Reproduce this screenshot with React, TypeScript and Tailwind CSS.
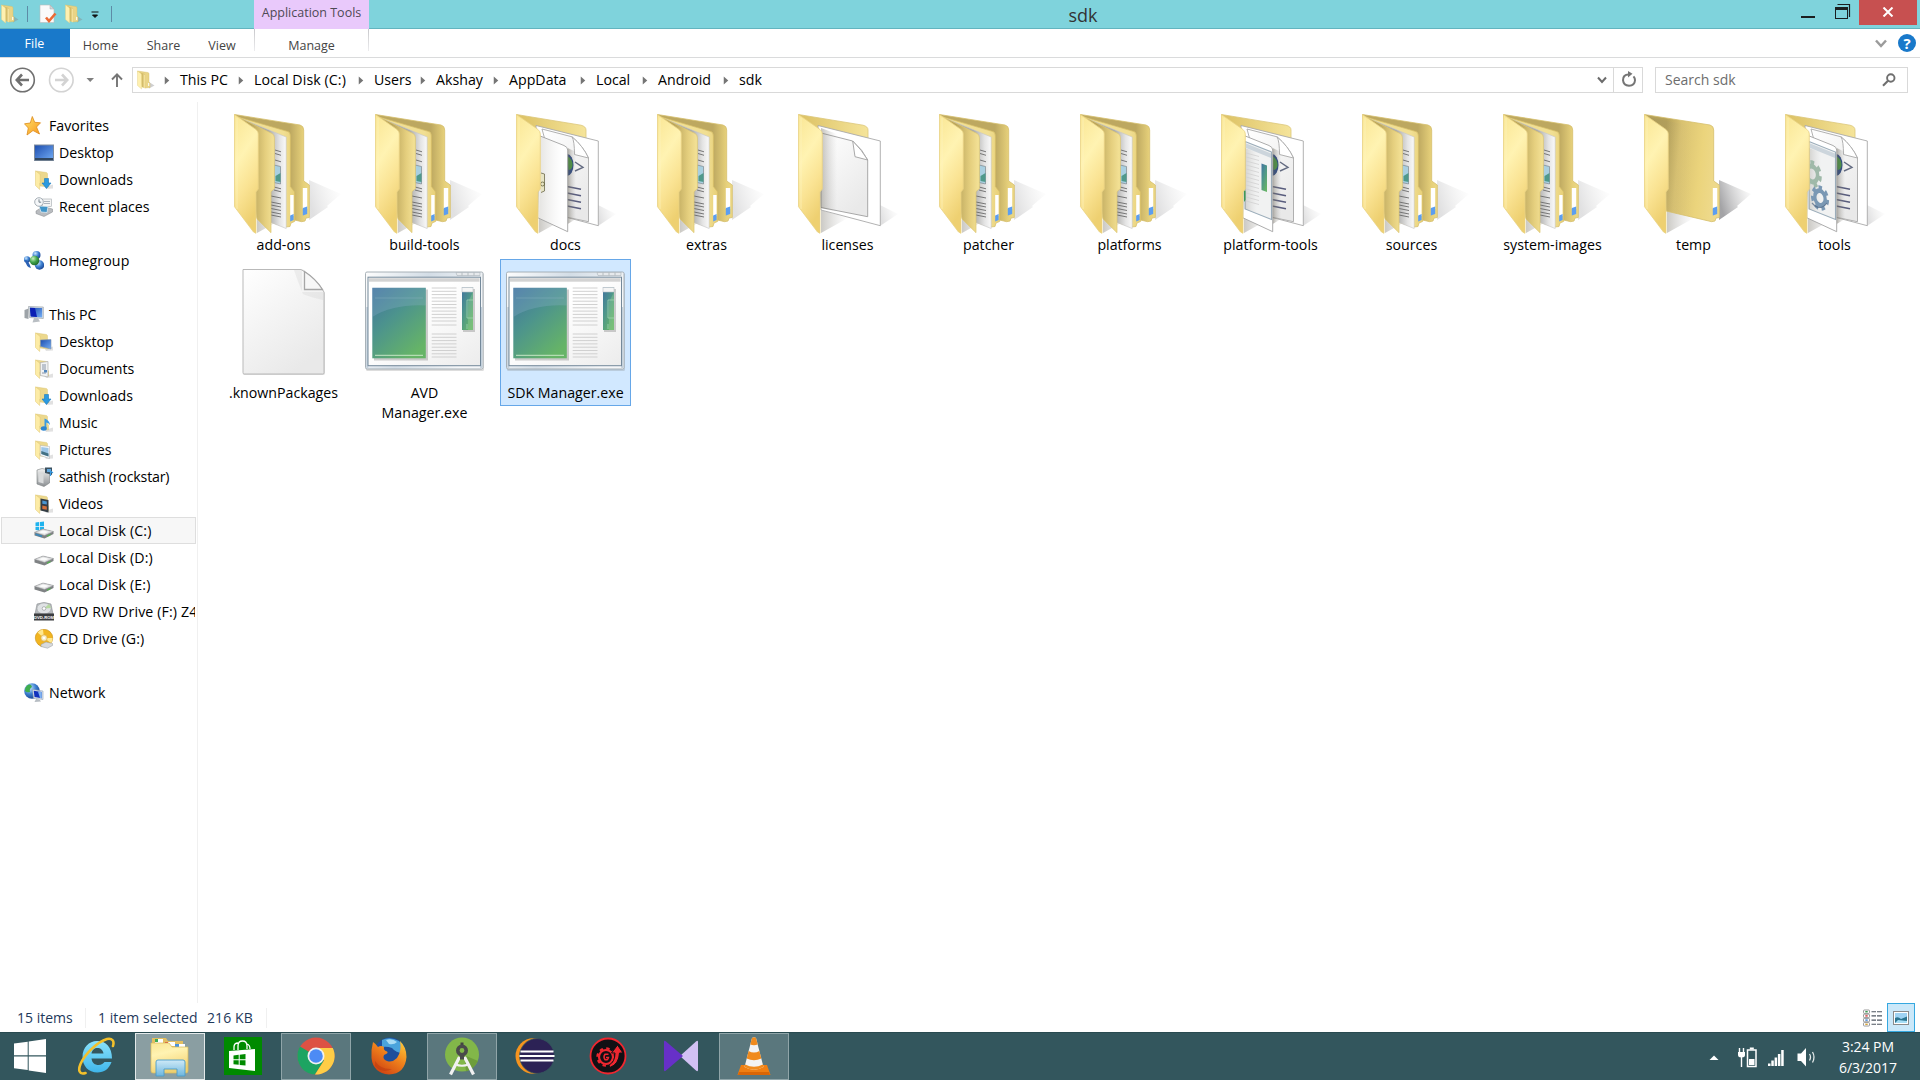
import type { ReactNode } from "react";

type FolderKind = "full" | "docs" | "paper" | "window" | "gears" | "empty";

const crumbs = [
  { label: "This PC", width: "w-[74px]" },
  { label: "Local Disk (C:)", width: "w-[120px] tracking-[0.08px]" },
  { label: "Users", width: "w-[62px]" },
  { label: "Akshay", width: "w-[73px]" },
  { label: "AppData", width: "w-[87px]" },
  { label: "Local", width: "w-[62px]" },
  { label: "Android", width: "w-[81px]" },
  { label: "sdk", width: "w-[80px]" },
];

const folders: { name: string; kind: FolderKind }[] = [
  { name: "add-ons", kind: "full" },
  { name: "build-tools", kind: "full" },
  { name: "docs", kind: "docs" },
  { name: "extras", kind: "full" },
  { name: "licenses", kind: "paper" },
  { name: "patcher", kind: "full" },
  { name: "platforms", kind: "full" },
  { name: "platform-tools", kind: "window" },
  { name: "sources", kind: "full" },
  { name: "system-images", kind: "full" },
  { name: "temp", kind: "empty" },
  { name: "tools", kind: "gears" },
];

// Gradients shared by all icons
function Defs() {
  return (
    <svg className="absolute h-0 w-0" aria-hidden="true">
      <defs>
        <linearGradient id="cover" x1="0" y1="0" x2="0.3" y2="1">
          <stop offset="0" stopColor="#fae694" />
          <stop offset="0.4" stopColor="#fff3b2" />
          <stop offset="0.7" stopColor="#fae393" />
          <stop offset="1" stopColor="#eed071" />
        </linearGradient>
        <linearGradient id="cover2" x1="0" y1="0" x2="1" y2="0">
          <stop offset="0.35" stopColor="#b8a35a" />
          <stop offset="0.75" stopColor="#e5cf7e" />
          <stop offset="1" stopColor="#f5e398" />
        </linearGradient>
        <linearGradient id="cover3" x1="0" y1="0" x2="1" y2="0">
          <stop offset="0.8" stopColor="#f1df93" />
          <stop offset="1" stopColor="#e8d078" />
        </linearGradient>
        <linearGradient id="back" x1="0" y1="0" x2="1" y2="0.15">
          <stop offset="0.3" stopColor="#b5a159" />
          <stop offset="0.5" stopColor="#d9c271" />
          <stop offset="0.8" stopColor="#ebd47c" />
          <stop offset="1" stopColor="#eed98a" />
        </linearGradient>
        <linearGradient id="backFull" x1="0" y1="0" x2="1" y2="0">
          <stop offset="0.74" stopColor="#bda860" />
          <stop offset="0.92" stopColor="#e6d07a" />
          <stop offset="1" stopColor="#edd985" />
        </linearGradient>
        <linearGradient id="backLight" x1="0" y1="0" x2="1" y2="0">
          <stop offset="0" stopColor="#dcc163" />
          <stop offset="1" stopColor="#f5e49a" />
        </linearGradient>
        <linearGradient id="sheet" x1="0" y1="0" x2="1" y2="0">
          <stop offset="0.6" stopColor="#a9a9a7" />
          <stop offset="0.85" stopColor="#e4e4e4" />
          <stop offset="1" stopColor="#fafafa" />
        </linearGradient>
        <linearGradient id="page" x1="0" y1="0" x2="0.6" y2="1">
          <stop offset="0" stopColor="#ffffff" />
          <stop offset="1" stopColor="#e9e9e9" />
        </linearGradient>
        <linearGradient id="shade" x1="0" y1="0" x2="1" y2="0">
          <stop offset="0" stopColor="#6b6658" stopOpacity="0.5" />
          <stop offset="1" stopColor="#999" stopOpacity="0" />
        </linearGradient>
        <linearGradient id="cast" x1="0" y1="0.5" x2="1" y2="0.1">
          <stop offset="0" stopColor="#6e6e72" stopOpacity="0.7" />
          <stop offset="1" stopColor="#aaa" stopOpacity="0" />
        </linearGradient>
        <linearGradient id="app" x1="0" y1="0" x2="0.7" y2="1">
          <stop offset="0" stopColor="#41729f" />
          <stop offset="0.45" stopColor="#4c938d" />
          <stop offset="1" stopColor="#66b467" />
        </linearGradient>
        <linearGradient id="frame" x1="0" y1="0" x2="1" y2="0.3">
          <stop offset="0" stopColor="#fdfdfd" />
          <stop offset="0.5" stopColor="#d3dde6" />
          <stop offset="1" stopColor="#f4f6f8" />
        </linearGradient>
        <linearGradient id="client" x1="0" y1="0" x2="1" y2="1">
          <stop offset="0.4" stopColor="#ffffff" />
          <stop offset="1" stopColor="#ececec" />
        </linearGradient>
        <linearGradient id="steel" x1="0" y1="0" x2="0" y2="1">
          <stop offset="0" stopColor="#f2f2f2" />
          <stop offset="1" stopColor="#8c9093" />
        </linearGradient>
        <linearGradient id="blue" x1="0" y1="0" x2="1" y2="1">
          <stop offset="0" stopColor="#1c4cae" />
          <stop offset="1" stopColor="#74aef5" />
        </linearGradient>
        <radialGradient id="ball" cx="0.35" cy="0.3" r="0.8">
          <stop offset="0" stopColor="#c9e6ff" />
          <stop offset="0.5" stopColor="#3c7fd0" />
          <stop offset="1" stopColor="#143a86" />
        </radialGradient>
        <radialGradient id="greenBall" cx="0.35" cy="0.3" r="0.8">
          <stop offset="0" stopColor="#c8f0bd" />
          <stop offset="0.5" stopColor="#3ea24a" />
          <stop offset="1" stopColor="#1b5d26" />
        </radialGradient>
        <linearGradient id="glass" x1="0" y1="0" x2="0" y2="1">
          <stop offset="0" stopColor="#cfeaf8" />
          <stop offset="1" stopColor="#6db6dd" />
        </linearGradient>
        <linearGradient id="ie" x1="0" y1="0" x2="0" y2="1">
          <stop offset="0" stopColor="#8ae2fb" />
          <stop offset="1" stopColor="#3fb6ea" />
        </linearGradient>
        <linearGradient id="fox" x1="1" y1="0" x2="0.3" y2="1">
          <stop offset="0" stopColor="#ffd33c" />
          <stop offset="0.5" stopColor="#f0821c" />
          <stop offset="1" stopColor="#cf4312" />
        </linearGradient>
        <linearGradient id="star" x1="0" y1="0" x2="1" y2="1">
          <stop offset="0" stopColor="#ffe46b" />
          <stop offset="1" stopColor="#f7961d" />
        </linearGradient>
      </defs>
    </svg>
  );
}

function Gear({ x, y, r, fill }: { x: number; y: number; r: number; fill: string }) {
  return (
    <g transform={`translate(${x} ${y}) skewY(14) scale(.72 1)`}>
      <circle r={r * 0.6} fill="none" stroke={fill} strokeWidth={r * 0.38} />
      <circle r={r * 0.88} fill="none" stroke={fill} strokeWidth={r * 0.34} strokeDasharray={`${r * 0.4} ${r * 0.39}`} />
    </g>
  );
}

function FolderIcon({ kind }: { kind: FolderKind }) {
  const open = kind === "full" || kind === "empty";
  return (
    <svg viewBox="0 0 120 120" className="h-[120px] w-[120px] shrink-0 overflow-visible">
      <path
        d={open ? "M85 66 L117 80 L103 92 L104 93 L85 106 Z" : "M92 91 L110 100 L92 112 Z"}
        fill="url(#cast)"
        opacity={kind === "empty" ? 0.9 : 0.3}
      />
      <path d="M33 96 L60 104 L33 119 Z" fill="url(#shade)" opacity=".7" />
      {open ? (
        <path
          d="M10.5 .5 L76 11 Q79.7 12 79.7 16 V67 L85.3 71 V103.5 L82 104 L81 107 L77.7 107.7 L32 97 Z"
          fill={kind === "empty" ? "url(#back)" : "url(#backFull)"}
          stroke="#d6bf6c"
          strokeWidth=".8"
        />
      ) : (
        <path d="M10.5 .5 L75 11.2 Q80 12.5 80 16 V40 L34 40 Z" fill="url(#backLight)" stroke="#dcc678" strokeWidth=".8" />
      )}
      {open && (
        <>
          <rect x="78.8" y="74" width="4.4" height="21" fill="#fff" />
          <path d="M78.8 94 l4.4 -1.5 V100 l-4.4 1.5 Z" fill="#5c9ef0" />
        </>
      )}

      {kind === "full" && (
        <>
          <path
            d="M14 3 L64 17.6 Q66.4 18.5 66.4 22 V72.5 L70.6 78 V107.5 L67 109 L66 112.5 L62 113 L33 104 Z"
            fill="url(#cover3)"
            stroke="#d6bd66"
            strokeWidth=".7"
          />
          <rect x="66.2" y="81" width="3.4" height="21" fill="#fff" />
          <path d="M66.2 101.5 l3.4 -1.5 V106 l-3.4 1.5 Z" fill="#5c9ef0" />
          <path d="M18 5 L62.2 23 V114.5 L33 103 Z" fill="url(#sheet)" stroke="#c6c6c6" strokeWidth=".6" />
          <path d="M51 36 l6 1.8 M51 39.5 l6 1.8 M51 46 l6 1.8" stroke="#6b6b6b" strokeWidth=".9" />
          <path d="M50 51 l6.5 1.5 V70 l-6.5 -1.5 Z" fill="#a9cfe0" stroke="#7e888e" strokeWidth=".7" />
          <path d="M51.5 62 l5 -3 V68 l-5 -1 Z" fill="#4f998b" />
          <path
            d="M50 73 l7 1.8 M50 76 l7 1.8 M47 82 l10 2 M47 88 l10 2 M47 91 l10 2 M47 94.5 l10 2 M47 98 l10 2 M47 101 l10 2"
            stroke="#6b6b6b"
            strokeWidth=".9"
          />
          <path
            d="M14 3 L48 19.5 Q50.4 20.5 50.4 24 V74.5 L47 77.7 V118.7 L33 105 Z"
            fill="url(#cover2)"
            stroke="#dcc571"
            strokeWidth=".7"
          />
        </>
      )}

      {!open && (
        <>
          <path d="M30 11.5 L92.3 27 V111.7 L33 96 Z" fill="#fff" stroke="#a9a9a9" strokeWidth=".9" />
          {kind === "paper" ? (
            <>
              <path d="M33 19 L64.7 27 Q75 36 79.7 46 V102.7 L33 93.5 Z" fill="url(#page)" stroke="#9f9f9f" strokeWidth=".9" />
              <path d="M64.7 27 L67 42.7 L79.7 46 Q74 36 64.7 27 Z" fill="#fff" stroke="#9f9f9f" strokeWidth=".9" />
              <path d="M33 14 L49 20 V98 L33 94 Z" fill="url(#shade)" opacity=".8" />
            </>
          ) : (
            <>
              <path d="M36 15 L66 22.8 Q77 32 82.5 44 V107.7 L60 103 Z" fill="url(#page)" stroke="#a8a8a8" strokeWidth=".9" />
              <path d="M66 22.8 Q68.5 27 68.5 40.5 L82.5 44 Q77 32 66 22.8 Z" fill="#fff" stroke="#a8a8a8" strokeWidth=".9" />
              <ellipse cx="61" cy="51" rx="6.5" ry="11" fill="#1e3f83" />
              <path d="M61 42 q6 3 5.5 10 q-1 4 -4 4 Z" fill="#3c9437" />
              <path d="M69 48 L77 53.3 L69 57" fill="none" stroke="#626a80" strokeWidth="1.4" />
              <path d="M61 72.5 l14 2.8 M61 79 l14 2.8 M61 85.5 l14 2.8 M61 92 l14 2.8" stroke="#585c7d" strokeWidth="1.4" />
              <path d="M61.7 34 L70 38 V105 L61.7 110 Z" fill="url(#shade)" />
              <path d="M33 21.5 L58 31.5 Q61.7 33 61.7 36 V117.7 L31.7 103.7 Z" fill="#fff" stroke="#a3a3a3" strokeWidth=".9" />
            </>
          )}
          {kind === "docs" && (
            <>
              <path d="M34 22 L56 31 V114 L33 104 Z" fill="url(#shade)" opacity=".35" />
              <path d="M35 59 l3.5 1 V77 l-3.5 1.5" fill="#e7e4c4" stroke="#6c6a4b" strokeWidth=".8" />
              <circle cx="36.5" cy="70" r="2" fill="none" stroke="#66633c" strokeWidth=".8" />
            </>
          )}
          {(kind === "window" || kind === "gears") && (
            <>
              <path d="M34 27.5 L60.5 38 V105.5 L34 95 Z" fill="#f1f2f2" stroke="#9badba" strokeWidth="1.1" />
              <path d="M34 29 L60 39.5 V44 L34 33.5 Z" fill="#ccd5dc" />
              <path d="M34 34 L46 38.5 V99 L34 95 Z" fill="url(#shade)" opacity=".45" />
            </>
          )}
          {kind === "window" && (
            <>
              <path
                d="M35 39 l13 3.5 M35 43 l13 3.5 M35 47 l13 3.5 M35 51 l13 3.5 M35 55 l13 3.5 M35 59 l13 3.5 M35 63 l13 3.5 M35 67 l13 3.5 M35 71 l13 3.5 M35 75 l13 3.5 M35 79 l13 3.5 M35 83 l13 3.5 M35 87 l13 3.5"
                stroke="#d0d0d0"
                strokeWidth=".8"
              />
              <path d="M50.5 49.5 l5.5 2 V78 l-5.5 -2 Z" fill="url(#app)" />
              <path d="M33 76 v12 l1.500 -2 v-9 Z" fill="#3e9a56" />
            </>
          )}
          {kind === "gears" && (
            <>
              <Gear x={37} y={60} r={13} fill="#9fb9a9" />
              <Gear x={45} y={84} r={12} fill="#7a98b4" />
              <path d="M37 89 q8 9 15 0" fill="none" stroke="#4e6583" strokeWidth="1.2" opacity=".7" />
            </>
          )}
        </>
      )}

      {kind === "empty" && <path d="M14 3 L58 12 V102 L33 97 Z" fill="url(#shade)" opacity=".25" />}
      <path
        d="M10.5 .5 L32 15.5 Q34.3 17.500 34.3 20 V75 L32 78 V119.3 L29.5 118 L10.5 92.7 Z"
        fill="url(#cover)"
        stroke="#e8d283"
        strokeWidth=".8"
      />
      <path d="M13 4 V95" stroke="#fff6c4" strokeWidth=".7" opacity=".8" />
    </svg>
  );
}

function BlankFileIcon() {
  return (
    <svg viewBox="0 0 120 120" className="h-[120px] w-[120px] shrink-0">
      <path d="M19 7.5 H79 L101 31 V111 Q101 113 99 113 H20.5 Q19 113 19 111 Z" fill="#9a9a9a" opacity=".35" />
      <path d="M19 7.5 H77 Q92 16 100 30 V110.5 Q100 112 98.5 112 H20 Q19 112 19 110.5 Z" fill="url(#page)" stroke="#b9b9b9" strokeWidth="1" />
      <path d="M70 8 H78 V30 H99 V38 Q86 35 79 32 Q74 20 70 8 Z" fill="#c8c8c8" opacity=".25" />
      <path d="M80.5 9.5 V27.5 H98.5 Q92 17 80.5 9.5 Z" fill="#f7f7f7" stroke="#a6a6a6" strokeWidth="1.3" />
    </svg>
  );
}

function ExeIcon() {
  return (
    <svg viewBox="0 0 120 120" className="h-[120px] w-[120px] shrink-0">
      <rect x="1" y="11" width="118" height="98" rx="1.5" fill="#777" opacity=".25" />
      <rect x=".5" y="10" width="117.5" height="97" rx="1.5" fill="url(#frame)" stroke="#9fa9b0" strokeWidth=".9" />
      <rect x="1.3" y="45" width="2" height="61" fill="#c3d0dc" />
      <rect x="115.2" y="45" width="2" height="61" fill="#c3d0dc" />
      <rect x="3" y="15.2" width="112.5" height="88.5" fill="url(#client)" stroke="#74899a" strokeWidth="1" />
      <rect x="4" y="16.2" width="110.5" height="3.5" fill="#d3d3d3" />
      <path d="M91 10.5 H115 V13.5 H92 Z" fill="#e6e9ec" stroke="#aab2b8" strokeWidth=".6" />
      <path d="M97 10.5 v3 M103 10.5 v3 M109 10.5 v3" stroke="#aab2b8" strokeWidth=".8" />
      <rect x="9" y="27.5" width="54" height="71" fill="#888" opacity=".4" />
      <rect x="7.3" y="25.8" width="53.5" height="70.5" fill="url(#app)" />
      <path d="M7.3 55 Q28 42 60.8 43.5 V25.8 H7.3 Z" fill="#8fb2cf" opacity=".28" />
      <path d="M10 36 H58" stroke="#8fb6c4" strokeWidth=".6" opacity=".7" />
      <path d="M10 93.3 H58" stroke="#d5edd0" strokeWidth=".9" />
      {[26, 29.3, 32.6, 35.9, 39.2, 42.5, 45.8, 49.1, 52.4, 55.7, 59, 63, 72, 75.3, 78.6, 81.9, 85.2, 88.5, 91.8, 95].map((y) => (
        <path key={y} d={`M66.7 ${y} H91.5`} stroke="#d0d0d0" strokeWidth="1" />
      ))}
      <rect x="98" y="27" width="12" height="43" fill="#888" opacity=".4" />
      <rect x="97" y="25.5" width="11" height="42.5" fill="url(#app)" />
      <rect x="97" y="25.5" width="11" height="4.5" fill="#f5f5f5" stroke="#b9c0c6" strokeWidth=".6" />
      <path d="M102 38 h6 M102 38 v18 h6 M102 62 v5" fill="none" stroke="#9ed0b4" strokeWidth=".8" />
      <path d="M108 30 V68 H103 V40 Z" fill="#a4dba1" opacity=".3" />
    </svg>
  );
}

// Small 20px icons of the navigation pane
function SmallFolder({ children }: { children?: ReactNode }) {
  return (
    <svg viewBox="0 0 20 20" className="h-5 w-5">
      <path d="M11 17 L19 14.5 V18.5 L12 19 Z" fill="#aaa" opacity=".35" />
      <path d="M2 1 L12.5 2.5 Q13.5 3 13.5 4 V11 L14.5 12 V17 L6 16 Z" fill="#ecd88d" stroke="#d9c06a" strokeWidth=".4" />
      <path d="M1.5 .8 L5.7 4 Q6.2 4.4 6.2 5 V12.5 L5.7 13 V19.5 L1.5 15.5 Z" fill="#fdeca6" stroke="#e0c76f" strokeWidth=".5" />
      {children}
    </svg>
  );
}

function ToolbarFolder() {
  return (
    <svg viewBox="0 0 20 20" className="h-5 w-5">
      <path d="M13 12 L18.5 15.5 L13 18.5 Z" fill="#888" opacity=".4" />
      <path d="M1.5 1 L12 2.5 Q13 2.8 13 4 V12 L14 13 V17.5 L9 18 Z" fill="#e9d486" stroke="#d4bb63" strokeWidth=".4" />
      <path d="M3 2 L8.5 4 Q9.2 4.4 9.2 5 V18.3 L5.500 17 Z" fill="#d3bb69" />
      <path d="M7.5 4 L9.2 5 V18.3 L7.5 18 Z" fill="#f2e09a" />
      <path d="M1.5 1 L5 3.5 Q5.6 4 5.6 5 V19 L1.5 15.5 Z" fill="#fef0b0" stroke="#e6cf7c" strokeWidth=".4" />
      <rect x="12.2" y="13" width="1" height="3" fill="#fff" />
    </svg>
  );
}

const downloadArrow = (
  <path d="M10.5 8.5 H14.5 V13 H17 L12.5 18.5 L8 13 H10.5 Z" fill="#2b9ae0" stroke="#1a78bd" strokeWidth=".6" />
);

function Svg20({ children }: { children: ReactNode }) {
  return (
    <svg viewBox="0 0 20 20" className="h-5 w-5">
      {children}
    </svg>
  );
}

function Drive({ windows }: { windows?: boolean }) {
  return (
    <Svg20>
      {windows && <path d="M1.5 1.5 L5.2 1 V5 H1.5 Z M6 .9 L10 .4 V5 H6 Z M1.5 5.8 H5.2 V9.6 L1.5 9.1 Z M6 5.8 H10 V10.2 L6 9.7 Z" fill="#1fb3ee" />}
      <path d="M.5 11.5 L9 8 L19.5 10.5 V13 L10.5 17.5 L.5 14.5 Z" fill="#7f8284" />
      <path d="M.5 11.3 L9 8 L19.5 10.5 L10.5 14.5 Z" fill="#dfe0e1" stroke="#8e9092" strokeWidth=".5" />
      <path d="M4.5 11.3 L9 9.5 L15 10.8 L10.5 12.8 Z" fill="#fbfbfb" />
      {windows && <path d="M1.5 13.2 L8 15.3" stroke="#3c87b8" strokeWidth="1.8" />}
      <path d="M13 15.2 l3.500 -1.700" stroke="#51b94b" strokeWidth="1.1" />
    </Svg20>
  );
}

const icons: Record<string, ReactNode> = {
  star: (
    <Svg20>
      <path d="M8.3 .5 L10.7 6.3 L16.5 6.8 L12.500 11 L15.5 18 L9 14.5 L3 19 L4.3 12 L.5 7.8 L6.3 7 Z" fill="url(#star)" stroke="#dd8a1a" strokeWidth=".8" />
    </Svg20>
  ),
  desktop: (
    <Svg20>
      <rect x=".5" y="2" width="19" height="15.5" fill="url(#blue)" stroke="#7f8c9d" />
      <rect x="1" y="15" width="18" height="2.2" fill="#31475f" />
    </Svg20>
  ),
  downloads: <SmallFolder>{downloadArrow}</SmallFolder>,
  recent: (
    <Svg20>
      <path d="M2 14 L9 9.5 L18.5 12 V15 L10 19.5 L2 16.5 Z" fill="#b9bcc0" stroke="#83878b" strokeWidth=".5" />
      <rect x="8.5" y="2" width="9" height="7.5" fill="#f4f4f4" stroke="#a2a8ad" strokeWidth=".6" />
      <path d="M10 4.5 h6 M10 6.5 h6" stroke="#9aa4b0" strokeWidth=".8" />
      <path d="M5 9 L14 9.5 L13 15.5 L7 15 Z" fill="#3f94c8" stroke="#e8f2f8" strokeWidth=".7" />
      <circle cx="5" cy="5" r="4.3" fill="#f5f7f9" stroke="#9da6ae" strokeWidth=".9" />
      <path d="M5 2.3 V5.2 H7.2" fill="none" stroke="#5b6975" strokeWidth=".8" />
    </Svg20>
  ),
  homegroup: (
    <Svg20>
      <circle cx="12.5" cy="4" r="4" fill="url(#ball)" />
      <circle cx="3" cy="8.5" r="3.2" fill="url(#ball)" />
      <path d="M1 9 q3 -1 6 8 q-5 -1 -6 -8" fill="#2c62b5" />
      <circle cx="15.5" cy="14" r="4.7" fill="url(#ball)" />
      <circle cx="10.5" cy="9.5" r="4.8" fill="url(#greenBall)" />
    </Svg20>
  ),
  pc: (
    <Svg20>
      <path d="M.5 5 L4.5 3.5 V14 L.5 13 Z" fill="#9da3a8" />
      <path d="M4.5 1.5 L19.3 2 V13.5 L5.5 12.5 Z" fill="#dfe3e7" stroke="#8f979e" strokeWidth=".6" />
      <path d="M5.8 2.7 L18.2 3.1 V12.4 L6.700 11.500 Z" fill="url(#blue)" />
      <path d="M6 2.7 L11 2.9 L13 11.9 L6.7 11.5 Z" fill="#0b1fb4" />
      <path d="M10 13 L14 13.3 L16 16.5 L8.5 17.5 Z" fill="#b9bec3" />
    </Svg20>
  ),
  folderDesktop: (
    <SmallFolder>
      <path d="M6.5 8 L17 7.5 V17 L6.5 14.5 Z" fill="url(#blue)" stroke="#8496a8" strokeWidth=".6" />
    </SmallFolder>
  ),
  documents: (
    <SmallFolder>
      <path d="M6.3 3.5 L14 2.5 V18 L6.3 16.5 Z" fill="#f1f2f3" stroke="#a3a3a3" strokeWidth=".6" />
      <path d="M8 6 h4 M8 8 h4 M8 10 h4 M8 14 h4" stroke="#7d8ba0" strokeWidth=".9" />
      <rect x="10" y="11" width="3" height="2.5" fill="#5287bf" />
    </SmallFolder>
  ),
  music: (
    <SmallFolder>
      <path d="M10.5 15 V5.5 Q15.5 7 16 12 Q14.5 9.5 12.3 9.5 V15.5" fill="#3a9be2" />
      <ellipse cx="9.8" cy="15.5" rx="3" ry="2.2" fill="#2d86d0" />
    </SmallFolder>
  ),
  pictures: (
    <SmallFolder>
      <path d="M6.3 5.5 L15.5 6.5 V18.5 L6.3 15.5 Z" fill="#f7f9fa" stroke="#a8adb2" strokeWidth=".5" />
      <path d="M7.3 7 L14.5 8 V16.5 L7.3 14 Z" fill="#9cc6e8" />
      <path d="M7.3 11 L14.5 13.5 V16.5 L7.3 14 Z" fill="#437083" />
    </SmallFolder>
  ),
  device: (
    <Svg20>
      <path d="M3 3 L8 1.5 L15.5 3 V16 L10 19.5 L3 17 Z" fill="url(#steel)" stroke="#7b7f82" strokeWidth=".6" />
      <path d="M4.5 5.5 L9.5 7 V16.5 L4.5 15 Z" fill="#d9dbdc" />
      <path d="M11 .5 H18 V8 L15 7 L11 6 Z" fill="#3b505f" />
      <path d="M13 2 h4 v3 h-4 Z" fill="#60a6dd" />
      <path d="M16.5 4 v5 M16.5 4 l2.5 2" stroke="#3a9be2" strokeWidth="1.2" />
    </Svg20>
  ),
  videos: (
    <SmallFolder>
      <path d="M6.5 4.5 L14.5 6 V18.5 L6.5 16.5 Z" fill="#333c45" />
      <path d="M8.3 6.5 L12.8 7.5 V10.5 L8.3 9.8 Z" fill="#4a96d2" />
      <path d="M8.3 11.5 L12.8 12.5 V15.8 L8.3 15 Z" fill="#d5713b" />
    </SmallFolder>
  ),
  system: <Drive windows />,
  drive: <Drive />,
  dvd: (
    <Svg20>
      <path d="M3 2 Q10 -1 17 2 L19 12 H1 Z" fill="#b5b9bc" stroke="#8e9295" strokeWidth=".6" />
      <ellipse cx="10" cy="6.5" rx="7" ry="5.5" fill="#dfe2e4" stroke="#a0a4a7" strokeWidth=".5" />
      <path d="M10 6.5 L15 2 L17 6 Z" fill="#b6d9a0" />
      <circle cx="10" cy="6.5" r="1.8" fill="#fff" stroke="#8b8f92" strokeWidth=".6" />
      <rect x="0" y="11.5" width="20" height="7" fill="#3b3d3f" />
      <text x="10" y="16.6" textAnchor="middle" fontSize="4.2" fontWeight="700" fill="#fff" className="font-['Liberation_Sans']">
        DVD-ROM
      </text>
    </Svg20>
  ),
  cd: (
    <Svg20>
      <circle cx="10" cy="9" r="8.7" fill="#f2b521" stroke="#c88f14" strokeWidth=".6" />
      <path d="M10 9 L3.5 3.5 Q6 1 9 .5 Z M10 9 L17 14 Q18.5 12 18.5 9 Z" fill="#ffe88f" />
      <circle cx="10" cy="9" r="3.2" fill="#f8ecc4" stroke="#d4a02c" strokeWidth=".6" />
      <circle cx="10" cy="9" r="1.3" fill="#fff" />
      <path d="M7 15.5 L12 13 L18.5 14.5 V16.5 L13.5 19.2 L7 17.5 Z" fill="#d8dadc" stroke="#94989b" strokeWidth=".5" />
    </Svg20>
  ),
  network: (
    <Svg20>
      <circle cx="8" cy="8" r="7.8" fill="url(#ball)" />
      <path d="M3 2.500 Q7 0 8 4 Q5 6 6 9 Q3 10 1 8 Q.8 4.5 3 2.5 Z" fill="#3fae4d" />
      <path d="M8.5 6.500 L19 8 V16.5 L9.5 15 Z" fill="#e0e6ec" stroke="#8ea0b3" strokeWidth=".6" />
      <path d="M9.7 7.8 L17.8 9 V15.3 L10.5 14 Z" fill="#1131bd" />
      <path d="M14 8.5 L17.8 9 V15.3 L16 15 Z" fill="#7fb2f0" />
      <path d="M12 16 L15.5 16.5 L17 18.5 L10.5 19 Z" fill="#b6bcc2" />
    </Svg20>
  ),
};

type NavEntry = { icon: string; label: string; child?: boolean; selected?: boolean; tracking?: string } | null;

const nav: NavEntry[] = [
  { icon: "star", label: "Favorites" },
  { icon: "desktop", label: "Desktop", child: true },
  { icon: "downloads", label: "Downloads", child: true },
  { icon: "recent", label: "Recent places", child: true },
  null,
  { icon: "homegroup", label: "Homegroup", tracking: "tracking-[0.1px]" },
  null,
  { icon: "pc", label: "This PC", tracking: "tracking-[-0.1px]" },
  { icon: "folderDesktop", label: "Desktop", child: true },
  { icon: "documents", label: "Documents", child: true, tracking: "tracking-[-0.1px]" },
  { icon: "downloads", label: "Downloads", child: true },
  { icon: "music", label: "Music", child: true },
  { icon: "pictures", label: "Pictures", child: true, tracking: "tracking-[-0.1px]" },
  { icon: "device", label: "sathish (rockstar)", child: true, tracking: "tracking-[-0.18px]" },
  { icon: "videos", label: "Videos", child: true },
  { icon: "system", label: "Local Disk (C:)", child: true, selected: true, tracking: "tracking-[0.12px]" },
  { icon: "drive", label: "Local Disk (D:)", child: true, tracking: "tracking-[0.12px]" },
  { icon: "drive", label: "Local Disk (E:)", child: true, tracking: "tracking-[0.12px]" },
  { icon: "dvd", label: "DVD RW Drive (F:) Z4", child: true, tracking: "tracking-[0.12px]" },
  { icon: "cd", label: "CD Drive (G:)", child: true, tracking: "tracking-[0.12px]" },
  null,
  { icon: "network", label: "Network" },
];

function TitleBar() {
  return (
    <div className="relative flex h-[29px] border-b border-[#63b4bf] bg-[#7fd3dc]">
      <div className="flex h-[28px] items-center">
        <div className="w-[27px]">
          <ToolbarFolder />
        </div>
        <div className="h-4 w-px bg-[#5d8ba6]" />
        <svg viewBox="0 0 20 20" className="ml-[10px] h-5 w-5">
          <path d="M2 1 H12 L16 5 V18.5 H2 Z" fill="#fafafa" stroke="#b9bcbe" strokeWidth=".6" />
          <path d="M12 1 V5 H16 Z" fill="#d3d6d8" stroke="#a7abad" strokeWidth=".5" />
          <path d="M8 13.5 L11 17 L17.5 9.5" fill="none" stroke="#ea6a35" strokeWidth="2.6" />
        </svg>
        <div className="ml-[6px] w-5">
          <ToolbarFolder />
        </div>
        <svg viewBox="0 0 8 8" className="ml-[7px] mt-[2px] h-2 w-2">
          <path d="M.5 1 H7.5 M1.5 4 H6.500 L4 6.5 Z" fill="#111" stroke="#111" strokeWidth="1" />
        </svg>
        <div className="ml-[12px] h-4 w-px bg-[#5d8ba6]" />
      </div>
      <div className="absolute left-[254px] top-0 h-[29px] w-[115px] bg-[#e9c9fb] text-center text-[12.5px] leading-[25px] text-[#4f4a55]">
        Application Tools
      </div>
      <div className="absolute inset-x-0 top-0 pl-[246px] text-center text-[18px] leading-[30px] text-[#333]">sdk</div>
      <div className="ml-auto flex h-[25px]">
        <svg viewBox="0 0 100 25" className="h-[25px] w-[100px]">
          <rect x="42" y="16" width="14" height="2" fill="#1b1f20" />
          <path d="M78.5 4.5 H90.5 V17" fill="none" stroke="#1b1f20" strokeWidth="1.2" />
          <rect x="76.5" y="7.5" width="12" height="11" fill="none" stroke="#1b1f20" />
          <rect x="76" y="7" width="13" height="3" fill="#1b1f20" />
        </svg>
        <div className="mr-[3px] flex w-[58px] items-center justify-center bg-[#c75050]">
          <svg viewBox="0 0 12 10" className="mt-[-2px] h-[10px] w-3">
            <path d="M1.5 .5 L10.5 9.5 M10.5 .5 L1.5 9.5" stroke="#fff" strokeWidth="2" />
          </svg>
        </div>
      </div>
    </div>
  );
}

function Ribbon() {
  return (
    <div className="flex h-[29px] border-b border-[#dadbdc] text-[12.5px] leading-[33px] text-[#444]">
      <div className="h-[28px] w-[70px] bg-[#1979ca] pr-px text-center leading-[29px] text-white">File</div>
      <div className="w-[61px] text-center">Home</div>
      <div className="w-[65px] text-center">Share</div>
      <div className="w-[58px] pr-[6px] text-center">View</div>
      <div className="flex h-[28px] w-[115px] justify-between">
        <div className="h-[22px] w-px bg-linear-to-b from-[#c9c9cc] to-[#ececee]" />
        <span>Manage</span>
        <div className="h-[22px] w-px bg-linear-to-b from-[#c9c9cc] to-[#ececee]" />
      </div>
      <div className="ml-auto flex h-[28px] items-center pr-1">
        <svg viewBox="0 0 12 9" className="mr-[11px] h-[9px] w-3">
          <path d="M1 1.5 L6 7 L11 1.5" fill="none" stroke="#9b9b9b" strokeWidth="2.5" />
        </svg>
        <div className="flex h-[18px] w-[18px] items-center justify-center rounded-full bg-[#1979ca] text-[15px] font-bold leading-none text-white">
          ?
        </div>
      </div>
    </div>
  );
}

function AddressBar() {
  return (
    <div className="flex h-[44px] items-center text-[14.2px] text-black">
      <svg viewBox="0 0 132 26" className="h-[26px] w-[132px] shrink-0">
        <circle cx="22.5" cy="13" r="11.8" fill="none" stroke="#707070" strokeWidth="1.6" />
        <path d="M29 13 H17.5 M22 7.5 L16.8 13 L22 18.5" fill="none" stroke="#707070" strokeWidth="2.6" />
        <circle cx="61.3" cy="13" r="11.8" fill="none" stroke="#d3d3d3" strokeWidth="1.6" />
        <path d="M55 13 H66.5 M62 7.5 L67.2 13 L62 18.5" fill="none" stroke="#d3d3d3" strokeWidth="2.6" />
        <path d="M86.5 11 H94 L90.2 15 Z" fill="#7f7f7f" />
        <path d="M117 20 V7.5 M112 12.5 L117 7.3 L122 12.5" fill="none" stroke="#757575" strokeWidth="1.9" />
      </svg>
      <div className="flex h-[26px] w-[1511px] items-center border border-[#d9d9d9]">
        <div className="ml-[3px] w-7">
          <ToolbarFolder />
        </div>
        {crumbs.map((crumb) => (
          <div key={crumb.label} className={`flex shrink-0 items-center whitespace-nowrap ${crumb.width}`}>
            <svg viewBox="0 0 6 10" className="mr-[10px] h-[9px] w-[6px] shrink-0">
              <path d="M.5 .5 L5.5 5 L.5 9.5 Z" fill="#757575" />
            </svg>
            <span className="leading-6">{crumb.label}</span>
          </div>
        ))}
        <div className="ml-auto flex h-full items-center">
          <svg viewBox="0 0 10 8" className="mr-[6px] h-2 w-[10px]">
            <path d="M1 1.5 L5 6 L9 1.5" fill="none" stroke="#6b6b6b" strokeWidth="2" />
          </svg>
          <div className="flex h-full w-[29px] items-center justify-center border-l border-[#d9d9d9]">
            <svg viewBox="0 0 16 18" className="ml-px mt-[-2px] h-[18px] w-4">
              <path d="M7.5 4.5 Q2 4.5 2 10.2 Q2.5 15.5 8 15.8 Q13.7 15.5 14 10.2 Q14 8 12.5 6.3" fill="none" stroke="#757575" strokeWidth="2" />
              <path d="M7 1 L11.5 3.8 L7 7.5 Z" fill="#757575" />
            </svg>
          </div>
        </div>
      </div>
      <div className="ml-3 flex h-[26px] w-[253px] items-center justify-between border border-[#d9d9d9] pl-[9px] pr-[11px] text-[#6d6d6d]">
        <span className="text-[14px] leading-6">Search sdk</span>
        <svg viewBox="0 0 14 14" className="h-[14px] w-[14px]">
          <circle cx="8.8" cy="5" r="3.7" fill="none" stroke="#6f6f6f" strokeWidth="1.9" />
          <path d="M6 7.8 L1 12.8" stroke="#6f6f6f" strokeWidth="2.2" />
        </svg>
      </div>
    </div>
  );
}

function NavPane() {
  return (
    <div className="w-[198px] shrink-0 overflow-hidden border-r border-[#f0f0f0] pt-[10px] text-[14.2px] text-black">
      {nav.map((entry, i) =>
        entry ? (
          <div
            key={i}
            className={`mx-px flex h-[27px] items-center overflow-hidden whitespace-nowrap border ${
              entry.selected ? "border-[#dedede] bg-[#f7f7f7]" : "border-transparent"
            } ${entry.child ? "pl-8" : "pl-[22px]"}`}
          >
            <div className="w-[25px] shrink-0">{icons[entry.icon]}</div>
            <span className={entry.tracking}>{entry.label}</span>
          </div>
        ) : (
          <div key={i} className="h-[27px]" />
        )
      )}
    </div>
  );
}

function FileItem({ name, selected, children }: { name: ReactNode; selected?: boolean; children: ReactNode }) {
  return (
    <div
      className={`mr-[10px] flex h-[147px] w-[131px] flex-col items-center border pt-[2px] ${
        selected ? "border-[#66a7e8] bg-[#d1e8ff]" : "border-transparent"
      }`}
    >
      {children}
      <div className="mt-px w-[125px] text-center leading-5">{name}</div>
    </div>
  );
}

function Files() {
  return (
    <div className="grid h-full grid-cols-[repeat(12,141px)] content-start gap-y-px pl-[20px] pt-[9px] text-[14.2px] text-black">
      {folders.map((folder) => (
        <FileItem key={folder.name} name={folder.name}>
          <FolderIcon kind={folder.kind} />
        </FileItem>
      ))}
      <FileItem name=".knownPackages">
        <BlankFileIcon />
      </FileItem>
      <FileItem
        name={
          <>
            AVD
            <br />
            Manager.exe
          </>
        }
      >
        <ExeIcon />
      </FileItem>
      <FileItem name="SDK Manager.exe" selected>
        <ExeIcon />
      </FileItem>
    </div>
  );
}

function StatusBar() {
  return (
    <div className="flex h-[29px] items-center text-[14px] text-[#1e395b]">
      <span className="ml-[17px] w-[68px]">15 items</span>
      <div className="h-5 w-px bg-[#f0f0f0]" />
      <span className="ml-3 w-[109px] whitespace-nowrap tracking-[0.06px]">1 item selected</span>
      <span className="w-[59px] whitespace-nowrap tracking-[0.1px]">216 KB</span>
      <div className="h-5 w-px bg-[#f0f0f0]" />
      <div className="ml-auto flex h-[29px] items-center">
        <svg viewBox="0 0 20 18" className="mr-[4px] h-[18px] w-5">
          {[1, 5.2, 9.4, 13.6].map((y, i) => (
            <g key={y}>
              <rect x=".5" y={y} width="6" height="3.4" rx=".8" fill="#fff" stroke="#8e8e8e" strokeWidth=".9" />
              <rect x="2.3" y={y + 1} width="2.4" height="1.4" fill={["#3a9c51", "#d94040", "#3d84d8", "#d9a73c"][i]} />
              <path d={`M8.5 ${y + 1.7} h4.5 M14 ${y + 1.7} h5`} stroke="#4d5560" strokeWidth="1.1" />
            </g>
          ))}
        </svg>
        <div className="mr-[5px] flex h-[29px] w-[28px] items-center justify-center border border-[#35a8e0] bg-[#cbe8f9]">
          <svg viewBox="0 0 16 14" className="h-[14px] w-4">
            <rect x=".5" y=".5" width="15" height="13" fill="#fff" stroke="#8b8b8b" />
            <rect x="2" y="2" width="12" height="10" fill="#9fd3f3" />
            <path d="M2 7 Q5 5 8 8 L14 5.5 V12 H2 Z" fill="#2c7590" />
            <path d="M5 9 L14 10 V12 H2 Z" fill="#a6ddf5" />
          </svg>
        </div>
      </div>
    </div>
  );
}

const taskIcons: { name: string; state?: "active" | "open"; icon: ReactNode }[] = [
  {
    name: "ie",
    icon: (
      <svg viewBox="0 0 40 40" className="h-10 w-10">
        <path
          d="M20 5 C29 5 35 11 35 22.5 H14.5 C15 27 18 29 21.5 29 C24.5 29 26.5 27.5 27.5 26 H34.500 C32 33 27 36.5 20.5 36.5 C11.500 36.5 5.5 30 5.5 21 C5.5 11.500 12 5 20 5 Z M14.5 17.500 H26.5 C26 14 23.5 12 20.5 12 C17.5 12 15 14 14.5 17.5 Z"
          fill="url(#ie)"
          fillRule="evenodd"
        />
        <path d="M36 10 C37.5 5 35.5 2 30 3 C20 6 8 18 3.5 28 C1 34 2 39 8.5 37" fill="none" stroke="#f3c02b" strokeWidth="2.6" strokeLinecap="round" />
      </svg>
    ),
  },
  {
    name: "explorer",
    state: "active",
    icon: (
      <svg viewBox="0 0 42 42" className="h-[42px] w-[42px]">
        <path d="M3 3 H17 L19 6 H34 V12 H3 Z" fill="#e3bf61" />
        <path d="M6 4 H14 V8 H6 Z M18 7 H26 V11 H18 Z M26 9 H36 V13 H26 Z" fill="#fff" />
        <path d="M6 4 h3 v3 h-3 Z" fill="#3eab55" />
        <path d="M16 7 h3 v3 h-3 Z" fill="#da4a3d" />
        <path d="M26 9 h4 v3 h-4 Z" fill="#4a94de" />
        <path d="M2 8 H20 L23 12 H39 V36 Q39 38 37 38 H4 Q2 38 2 36 Z" fill="url(#cover)" stroke="#d9bb5c" strokeWidth=".7" />
        <path d="M7 27 Q7 25 9 25 H34 Q36 25 36 27 V41 H28 V34 H15 V41 H7 Z" fill="url(#glass)" stroke="#4a9ccb" strokeWidth=".9" />
      </svg>
    ),
  },
  {
    name: "store",
    icon: (
      <svg viewBox="0 0 38 38" className="h-[38px] w-[38px]">
        <rect width="38" height="38" fill="#008a00" />
        <path d="M14 13 V9 Q14 4 18.5 4 Q23 4 23 9 V12 M10 13 V10 Q10 6 14 6 M23 7 Q26 8 26 12" fill="none" stroke="#fff" strokeWidth="1.3" />
        <path d="M5 14 L31 12 V34 L5 31 Z" fill="#fff" />
        <path d="M9.5 18.5 L14.7 17.8 V22.3 H9.5 Z M15.7 17.7 L21.5 17 V22.3 H15.7 Z M9.5 23.3 H14.7 V27.7 L9.5 27.2 Z M15.7 23.3 H21.5 V28.5 L15.7 27.9 Z" fill="#008a00" />
      </svg>
    ),
  },
  {
    name: "chrome",
    state: "open",
    icon: (
      <svg viewBox="0 0 38 38" className="h-[38px] w-[38px]">
        <circle cx="19" cy="19" r="18.5" fill="#dd5144" />
        <path d="M19 19 L3 9.5 A18.5 18.5 0 0 0 18 37.5 L27 23.5 Z" fill="#1da462" />
        <path d="M19 11 H35.8 A18.5 18.5 0 0 1 18 37.5 L27 23.5 Z" fill="#ffcd46" />
        <circle cx="19" cy="19" r="8.5" fill="#f1f1f1" />
        <circle cx="19" cy="19" r="6.8" fill="#4c8bf5" />
      </svg>
    ),
  },
  {
    name: "firefox",
    icon: (
      <svg viewBox="0 0 38 38" className="h-[38px] w-[38px]">
        <circle cx="20" cy="16.5" r="16" fill="#1d4f9c" />
        <path d="M12 3 Q20 -1 29 4 Q34 9 33 16 Q26 16 22 11 Q17 9 12 10 Z" fill="#4aa3dc" />
        <path d="M16 3 Q22 1 27 5 Q24 8 19 7 Z" fill="#a9dcf5" />
        <path
          d="M3 5 Q6 7 8 10 Q11 8 14 10 Q13 13 17 14.5 Q19 16 14 18 Q12 22 17 24 Q22 26 27 21 Q32 14 30 4 Q36.5 10 36.5 20 Q35 37 19 37.5 Q3 36 1.5 21 Q1 12 3 5 Z"
          fill="url(#fox)"
        />
        <path d="M5 24 Q11 33 22 32 Q12 37 5 29 Z" fill="#b93810" opacity=".5" />
      </svg>
    ),
  },
  {
    name: "studio",
    state: "open",
    icon: (
      <svg viewBox="0 0 38 40" className="h-10 w-[38px]">
        <circle cx="19" cy="18.5" r="17" fill="#82b749" />
        <path d="M21 19 L35 25 Q31 33 23 35.500 Z" fill="#6d9d3b" />
        <path d="M17.5 6.500 h3 v4 h-3 Z" fill="#424242" />
        <path d="M16.5 21 L7.5 38.500 M21.5 21 L30.5 38.500" stroke="#f1f1f1" strokeWidth="3.2" />
        <path d="M12 28 Q19 31.500 26 28" fill="none" stroke="#f1f1f1" strokeWidth="2.2" />
        <circle cx="19" cy="14.5" r="4.2" fill="none" stroke="#4a4a4a" strokeWidth="3.6" />
        <path d="M17 19 h4 v4.5 h-4 Z" fill="#4a4a4a" />
      </svg>
    ),
  },
  {
    name: "eclipse",
    icon: (
      <svg viewBox="0 0 40 38" className="h-[38px] w-10">
        <circle cx="18.3" cy="19" r="17.8" fill="#f7941e" />
        <circle cx="22" cy="19" r="17.4" fill="#2c2255" stroke="#33565d" strokeWidth=".8" />
        <path d="M5.5 14.5 H38.5 M4.5 19 H39.5 M5.5 23.5 H38.5" stroke="#fff" strokeWidth="2.2" />
      </svg>
    ),
  },
  {
    name: "game-booster",
    icon: (
      <svg viewBox="0 0 38 38" className="h-[38px] w-[38px]">
        <circle cx="19" cy="19" r="17.5" fill="#111014" stroke="#ef2730" strokeWidth="1.8" />
        <circle cx="17" cy="20" r="7" fill="none" stroke="#ef2730" strokeWidth="2.2" />
        <circle cx="17" cy="20" r="8.600" fill="none" stroke="#ef2730" strokeWidth="2.2" strokeDasharray="3.4 3.35" />
        <path d="M19.500 17.300 H16 Q14 20 16 22.700 Q19 23.500 19.500 20.500 H17" fill="none" stroke="#ef2730" strokeWidth="1.5" />
        <path d="M20 28 Q26 25 26 16 H22.5 L28.5 8 L34 16 H30.5 Q30 27 21 30.500 Z" fill="#ef2730" stroke="#111014" strokeWidth="1" />
      </svg>
    ),
  },
  {
    name: "kmplayer",
    icon: (
      <svg viewBox="0 0 36 32" className="h-8 w-9">
        <path d="M35 2 Q35 0 33 1.5 L17 16 L33 30.5 Q35 32 35 30 Z" fill="#d2c1f4" />
        <path d="M1 2 Q1 0 3 1.5 L20 16 L3 30.5 Q1 32 1 30 Z" fill="#6730c8" />
      </svg>
    ),
  },
  {
    name: "vlc",
    state: "open",
    icon: (
      <svg viewBox="0 0 36 40" className="h-10 w-9">
        <path d="M5 29 H31 L34.5 39 H1.5 Z" fill="#ef7f13" />
        <path d="M3 36 H33 L34 39 H2 Z" fill="#d96606" />
        <path d="M16 2 Q18 .5 20 2 L27.5 31 Q18 36.5 8.5 31 Z" fill="#f3f3f3" />
        <path d="M16 2 Q18 .5 20 2 L21.7 8.5 Q18 10 14.3 8.5 Z" fill="#f08a1c" />
        <path d="M12.6 15 Q18 18 23.4 15 L25.3 22.5 Q18 26 10.7 22.5 Z" fill="#f08a1c" />
        <path d="M9.2 28.5 Q18 33 26.8 28.5 L27.5 31 Q18 36.5 8.5 31 Z" fill="#f08a1c" />
      </svg>
    ),
  },
];

function Taskbar() {
  return (
    <div className="flex h-12 border-t border-[#294a50] bg-[#33565d]">
      <div className="flex w-[62px] items-center pl-[14px]">
        <svg viewBox="0 0 32 34" className="mt-[-2px] h-[34px] w-8">
          <path d="M0 4.6 L13.7 2.7 V16.3 H0 Z M14.7 2.5 L32 0 V16.3 H14.7 Z M0 17.5 H13.7 V31.1 L0 29.2 Z M14.7 17.5 H32 V34 L14.7 31.4 Z" fill="#fff" />
        </svg>
      </div>
      <div className="flex gap-[3px]">
        {taskIcons.map((task) => (
          <div
            key={task.name}
            className={`flex h-[47px] w-[70px] items-center justify-center border pb-px ${
              task.state === "active"
                ? "border-[#e3e9ea] bg-[#8a9ea2]"
                : task.state === "open"
                  ? "border-[#90a5a9] bg-[#5a777d]"
                  : "border-transparent"
            }`}
          >
            {task.icon}
          </div>
        ))}
      </div>
      <div className="ml-auto flex items-center">
        <svg viewBox="0 0 110 24" className="h-6 w-[110px]">
          <path d="M.5 15 L5 10.500 L9.5 15 Z" fill="#fff" />
          <path d="M30.5 3 V8 M34.5 3 V8 M32.500 12 V22" stroke="#fff" strokeWidth="1.4" />
          <path d="M29 7 H36 V10 Q36 12.500 32.5 12.500 Q29 12.500 29 10 Z" fill="#fff" />
          <path d="M38.500 5 H47 V21.5 H38.5 Z" fill="none" stroke="#fff" strokeWidth="1.5" />
          <rect x="40.800" y="2.5" width="4" height="2" fill="#fff" />
          <rect x="40" y="14" width="5.5" height="6" fill="#fff" />
          <path d="M59 18.500 h2.500 v2.500 h-2.5 Z M62.3 15.5 h2.5 V21 h-2.5 Z M65.6 12.5 h2.5 V21 h-2.5 Z M68.9 9 h2.5 V21 h-2.5 Z M72.2 5 h2.5 V21 h-2.5 Z" fill="#fff" />
          <path d="M88.500 8.500 H92 L97 3 V21.500 L92 16 H88.500 Z" fill="#fff" />
          <path d="M100.5 9 Q102.5 12 100.5 15.5 M103.5 7 Q106.5 12 103.5 17.5" fill="none" stroke="#e3e9ea" strokeWidth="1.3" />
        </svg>
        <div className="ml-[10px] mr-[13px] mt-px w-[78px] text-center text-[14px] leading-[21.5px] tracking-[-0.05px] text-white">
          <div>3:24 PM</div>
          <div>6/3/2017</div>
        </div>
      </div>
    </div>
  );
}

export default function App() {
  return (
    <div className="flex h-[1080px] w-[1920px] flex-col overflow-hidden bg-white font-['Open_Sans','Noto_Sans',sans-serif]">
      <Defs />
      <TitleBar />
      <Ribbon />
      <AddressBar />
      <div className="flex h-[901px] shrink-0">
        <NavPane />
        <Files />
      </div>
      <StatusBar />
      <Taskbar />
    </div>
  );
}
